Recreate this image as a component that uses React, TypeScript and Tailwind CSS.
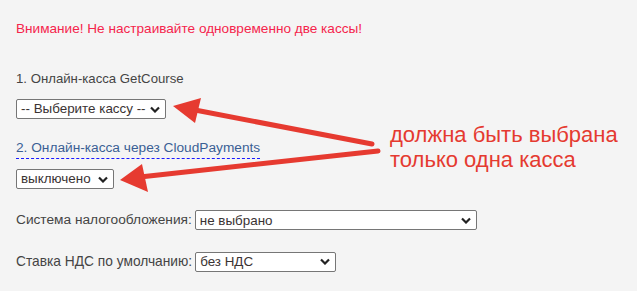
import React from 'react';

interface FakeSelectProps {
  value: string;
  width: string;
}

const Chevron = () => (
  <svg viewBox="0 0 10 6" className="h-[7px] w-[10px] shrink-0" fill="none" stroke="#222" strokeWidth={2.2}>
    <path d="M1 1l4 4 4-4" />
  </svg>
);

// Native-looking select box, drawn by hand so it renders the same everywhere
const FakeSelect: React.FC<FakeSelectProps> = ({ value, width }) => (
  <div
    className={`${width} h-[20px] flex items-center justify-between bg-white border border-[#767676] rounded-[2px] pl-[4px] pr-[5px] text-[13.4px] text-[#3a3333] leading-none`}
  >
    <span className="whitespace-nowrap">{value}</span>
    <Chevron />
  </div>
);

const App: React.FC = () => {
  return (
    <div
      className="relative w-[637px] h-[291px] bg-[#f4f4f4] overflow-hidden"
      style={{ fontFamily: '"Liberation Sans", Arial, sans-serif' }}
    >
      <div className="flex flex-col items-start pl-4">
        {/* Warning */}
        <p className="mt-[19px] text-[13.6px] leading-[20px] text-[#f5244c]">
          Внимание! Не настраивайте одновременно две кассы!
        </p>

        {/* GetCourse */}
        <p className="mt-[31px] text-[13.2px] leading-[18px] text-[#444]">1. Онлайн-касса GetCourse</p>
        <div className="mt-[11px]">
          <FakeSelect value="-- Выберите кассу --" width="w-[150px]" />
        </div>

        {/* CloudPayments */}
        <p className="mt-[20px] text-[13.7px] leading-[18px] pb-[1px] text-[#3a5f94] border-b border-dashed border-[#1a1aff]">
          2. Онлайн-касса через CloudPayments
        </p>
        <div className="mt-[10px]">
          <FakeSelect value="выключено" width="w-[98px]" />
        </div>

        {/* Tax system */}
        <div className="mt-[21px] flex items-center gap-[3px] text-[13.7px] text-[#444]">
          <span>Система налогообложения:</span>
          <FakeSelect value="не выбрано" width="w-[282px]" />
        </div>

        {/* VAT */}
        <div className="mt-[21px] flex items-center gap-[3px] text-[13.75px] text-[#444]">
          <span>Ставка НДС по умолчанию:</span>
          <FakeSelect value="без НДС" width="w-[141px]" />
        </div>
      </div>

      {/* Annotation overlay */}
      <svg className="absolute inset-0 pointer-events-none" width="637" height="291" viewBox="0 0 637 291">
        <line x1="372" y1="144" x2="195" y2="110" stroke="#e63a30" strokeWidth="5" strokeLinecap="round" />
        <polygon points="173,106 201,98 195,123" fill="#e63a30" />
        <line x1="378" y1="151" x2="140" y2="177" stroke="#e63a30" strokeWidth="5" strokeLinecap="round" />
        <polygon points="120,180 142,164 148,192" fill="#e63a30" />
      </svg>
      <div className="absolute left-[390px] top-[122px] text-[22px] leading-[25px] text-[#e53a30]">
        <div>должна быть выбрана</div>
        <div>только одна касса</div>
      </div>
    </div>
  );
};

export default App;
